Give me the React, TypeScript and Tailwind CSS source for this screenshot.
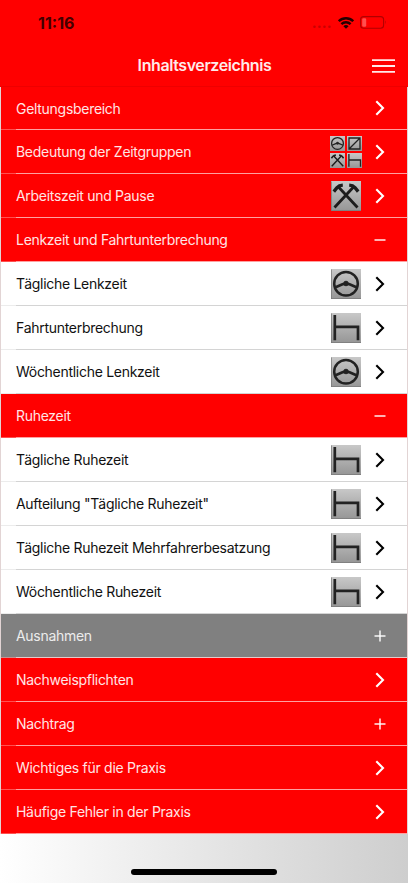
import { useState } from "react";

type IconName = "wheel" | "bed" | "hammers" | "group";

interface Entry {
  title: string;
  tone: "red" | "white" | "gray";
  action: "open" | "collapse" | "expand";
  icon?: IconName;
}

const entries: Entry[] = [
  { title: "Geltungsbereich", tone: "red", action: "open" },
  { title: "Bedeutung der Zeitgruppen", tone: "red", action: "open", icon: "group" },
  { title: "Arbeitszeit und Pause", tone: "red", action: "open", icon: "hammers" },
  { title: "Lenkzeit und Fahrtunterbrechung", tone: "red", action: "collapse" },
  { title: "Tägliche Lenkzeit", tone: "white", action: "open", icon: "wheel" },
  { title: "Fahrtunterbrechung", tone: "white", action: "open", icon: "bed" },
  { title: "Wöchentliche Lenkzeit", tone: "white", action: "open", icon: "wheel" },
  { title: "Ruhezeit", tone: "red", action: "collapse" },
  { title: "Tägliche Ruhezeit", tone: "white", action: "open", icon: "bed" },
  { title: 'Aufteilung "Tägliche Ruhezeit"', tone: "white", action: "open", icon: "bed" },
  { title: "Tägliche Ruhezeit Mehrfahrerbesatzung", tone: "white", action: "open", icon: "bed" },
  { title: "Wöchentliche Ruhezeit", tone: "white", action: "open", icon: "bed" },
  { title: "Ausnahmen", tone: "gray", action: "expand" },
  { title: "Nachweispflichten", tone: "red", action: "open" },
  { title: "Nachtrag", tone: "red", action: "expand" },
  { title: "Wichtiges für die Praxis", tone: "red", action: "open" },
  { title: "Häufige Fehler in der Praxis", tone: "red", action: "open" },
];

const tones = {
  red: "bg-[#ff0000] text-[#ffe5e5] border-[#ff5050] after:bg-[#ffa0a0]",
  white: "bg-white text-[#111] border-[#ececec] after:bg-[#d4d4d4]",
  gray: "bg-[#808080] text-[#ececec] border-[#c89090] after:bg-[#e8c8c8]",
};

function Wheel() {
  return (
    <g fill="none" stroke="#222">
      <circle cx="15" cy="14.8" r="11.8" strokeWidth="2.5" />
      <path d="M4 18.5 11.5 15.3Q15 13.8 18.5 15.3L26 18.5" strokeWidth="2.7" />
      <circle cx="15" cy="14.5" r="2.3" fill="#222" strokeWidth="1" />
    </g>
  );
}

function Bed() {
  return <path d="M3.8 2V27.3M3.8 13.9H27V27.3" fill="none" stroke="#222" strokeWidth="2.7" />;
}

function Hammers() {
  return (
    <g fill="none" stroke="#1c1c1c">
      <path d="M7.5 6 26.5 26.5M22.5 6 3.5 26.5" strokeWidth="2.8" />
      <path d="M2.8 10.6 6 6.6Q8 4.4 11.8 4.2M27.2 10.6 24 6.6Q22 4.4 18.2 4.2" strokeWidth="3.3" />
    </g>
  );
}

function Slash() {
  return <path d="M4 4H26V26H4ZM4 26 26 4" fill="none" stroke="#222" strokeWidth="2.6" />;
}

function Tile({ children, small }: { children: React.ReactNode; small?: boolean }) {
  return (
    <svg
      viewBox="0 0 30 30"
      className={`bg-linear-to-b from-[#c8c8c8] to-[#969696] ${small ? "size-[15px]" : "size-[30px]"}`}
    >
      {children}
      {!small && <path d="M.5 30V.5M0 29.5H30" stroke="#777" strokeWidth=".7" />}
    </svg>
  );
}

function RowIcon({ name }: { name: IconName }) {
  if (name === "group") {
    return (
      <div className="grid grid-cols-[15px_15px] gap-[2px] w-8 h-8 -ml-px -mr-px">
        <Tile small><Wheel /></Tile>
        <Tile small><Slash /></Tile>
        <Tile small><Hammers /></Tile>
        <Tile small><Bed /></Tile>
      </div>
    );
  }
  return (
    <Tile>
      {name === "wheel" && <Wheel />}
      {name === "bed" && <Bed />}
      {name === "hammers" && <Hammers />}
    </Tile>
  );
}

function ActionIcon({ action, dark }: { action: Entry["action"]; dark: boolean }) {
  return (
    <svg viewBox="0 0 12 16" className="w-3 h-4 shrink-0" fill="none" stroke={dark ? "#000" : "#fff"}>
      {action === "open" && <path d="M2.3 1.3 9 8 2.3 14.7" strokeWidth="2.1" />}
      {action !== "open" && <path d="M.5 8H11.5" strokeWidth="1.4" />}
      {action === "expand" && <path d="M6 2.5V13.5" strokeWidth="1.4" />}
    </svg>
  );
}

function StatusBar() {
  return (
    <div className="h-11 flex items-center justify-between pl-[38px] pr-[21px] pt-px">
      <span className="text-[16px] font-bold text-[#450000] leading-none">11:16</span>
      <div className="flex items-center gap-[6px]">
        <svg viewBox="0 0 20 12" className="w-5 h-3" fill="#c80000">
          <circle cx="2.5" cy="9.7" r="1.3" />
          <circle cx="7.5" cy="9.7" r="1.3" />
          <circle cx="12.5" cy="9.7" r="1.3" />
          <circle cx="17.5" cy="9.7" r="1.3" />
        </svg>
        <svg viewBox="0 0 16 12" className="w-4 h-3" fill="none" stroke="#250000" strokeWidth="2.4">
          <path d="M.8 4.2a10.3 10.3 0 0 1 14.4 0M3.4 7.1a6.5 6.5 0 0 1 9.2 0" />
          <path d="M5.4 9.2a3.8 3.8 0 0 1 5.2 0L8 11.8Z" fill="#250000" stroke="none" />
        </svg>
        <svg viewBox="0 0 27 13" className="w-[27px] h-[13px]">
          <rect x=".6" y=".6" width="23" height="11.6" rx="3" fill="none" stroke="#b00000" strokeWidth="1.1" />
          <rect x="2.2" y="2.2" width="4" height="8.6" rx="1.3" fill="#ff4f4f" />
          <path d="M25 4.3Q26.6 6.4 25 8.5Z" fill="#b00000" />
        </svg>
      </div>
    </div>
  );
}

export default function App() {
  const [active, setActive] = useState("");

  return (
    <div className="relative w-[408px] h-[883px] overflow-hidden bg-linear-to-r from-white to-[#cecece] font-[Inter,sans-serif]">
      <header className="h-[87px] bg-[#ff0000] border-b border-[#ee0000]">
        <StatusBar />
        <div className="h-[43px] grid grid-cols-[1fr_auto_1fr] items-center pl-[14px] pr-[13px]">
          <span />
          <h1 className="text-[16px] font-semibold text-[#ffeaea] tracking-[-0.41px] -mt-0.5">Inhaltsverzeichnis</h1>
          <button className="justify-self-end" aria-label="Menü">
            <svg viewBox="0 0 23 14" className="w-[23px] h-[14px]" stroke="#ffeaea" strokeWidth="1.8">
              <path d="M0 1.2H23M0 7H23M0 12.8H23" />
            </svg>
          </button>
        </div>
      </header>
      <ul className="border-x border-[#e2d4d4]">
        {entries.map((entry) => (
          <li
            key={entry.title}
            onClick={() => setActive(entry.title)}
            aria-current={active === entry.title}
            className={`relative h-[43.97px] first:h-[43px] flex items-center border-b pl-[15px] pr-[21px] pt-px first:pt-0 after:absolute after:left-[15px] after:right-0 after:-bottom-px after:h-px ${tones[entry.tone]}`}
          >
            <span className="flex-1 text-[14px] tracking-[-0.29px] whitespace-nowrap">{entry.title}</span>
            {entry.icon && (
              <div className="mr-[13px]">
                <RowIcon name={entry.icon} />
              </div>
            )}
            <ActionIcon action={entry.action} dark={entry.tone === "white"} />
          </li>
        ))}
      </ul>
      <div className="absolute left-[131px] top-[869px] w-[146px] h-[6px] rounded-full bg-black" />
    </div>
  );
}
